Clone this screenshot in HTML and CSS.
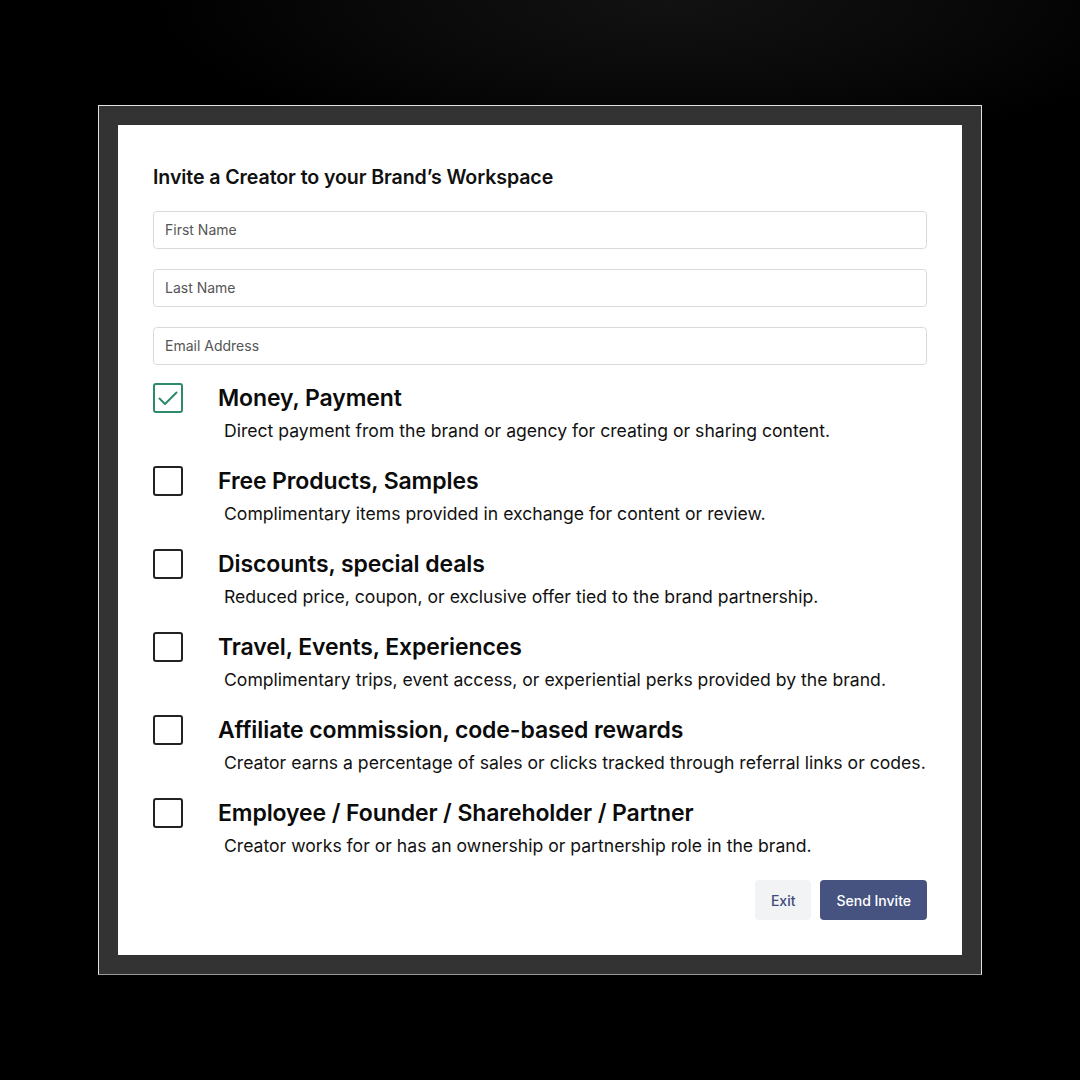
FILE: index.html
```html
<!DOCTYPE html>
<html lang="en">
<head>
<meta charset="utf-8">
<title>Invite a Creator</title>
<link rel="stylesheet" href="styles.css">
</head>
<body>
<div class="frame">
  <div class="card">
    <h1 class="title">Invite a Creator to your Brand’s Workspace</h1>
    <div class="fields">
      <div class="field">First Name</div>
      <div class="field">Last Name</div>
      <div class="field">Email Address</div>
    </div>
    <div class="options">
      <div class="option">
        <span class="box checked">
          <svg viewBox="0 0 30 30" width="30" height="30"><path d="M6.5 15.5 L12 21 L23.5 9.5" fill="none" stroke="#2f8a6c" stroke-width="2" stroke-linecap="round" stroke-linejoin="round"/></svg>
        </span>
        <div class="text">
          <div class="opt-title">Money, Payment</div>
          <div class="opt-desc">Direct payment from the brand or agency for creating or sharing content.</div>
        </div>
      </div>
      <div class="option">
        <span class="box"></span>
        <div class="text">
          <div class="opt-title">Free Products, Samples</div>
          <div class="opt-desc">Complimentary items provided in exchange for content or review.</div>
        </div>
      </div>
      <div class="option">
        <span class="box"></span>
        <div class="text">
          <div class="opt-title">Discounts, special deals</div>
          <div class="opt-desc">Reduced price, coupon, or exclusive offer tied to the brand partnership.</div>
        </div>
      </div>
      <div class="option">
        <span class="box"></span>
        <div class="text">
          <div class="opt-title">Travel, Events, Experiences</div>
          <div class="opt-desc">Complimentary trips, event access, or experiential perks provided by the brand.</div>
        </div>
      </div>
      <div class="option">
        <span class="box"></span>
        <div class="text">
          <div class="opt-title">Affiliate commission, code-based rewards</div>
          <div class="opt-desc">Creator earns a percentage of sales or clicks tracked through referral links or codes.</div>
        </div>
      </div>
      <div class="option">
        <span class="box"></span>
        <div class="text">
          <div class="opt-title">Employee / Founder / Shareholder / Partner</div>
          <div class="opt-desc">Creator works for or has an ownership or partnership role in the brand.</div>
        </div>
      </div>
    </div>
    <div class="actions">
      <button class="btn btn-exit">Exit</button>
      <button class="btn btn-send">Send Invite</button>
    </div>
  </div>
</div>
</body>
</html>
```

FILE: styles.css
```css
* { box-sizing: border-box; }

html, body {
  margin: 0;
  padding: 0;
}

body {
  width: 1080px;
  height: 1080px;
  overflow: hidden;
  background: radial-gradient(ellipse 520px 160px at 62% 0%, #121212 0%, #0a0a0a 50%, #000 100%), #000;
  font-family: Inter, "Noto Sans", "Liberation Sans", sans-serif;
  color: #000;
}

.frame {
  width: 884px;
  height: 870px;
  margin: 105px 0 0 98px;
  padding: 19px;
  background: #333;
  border: 1px solid #e2e2e2;
  border-bottom-color: #9a9a9a;
}

.card {
  width: 844px;
  height: 830px;
  background: #fff;
  padding: 40px 35px 35px 35px;
}

.title {
  margin: 0;
  font-size: 19.6px;
  line-height: 24px;
  font-weight: 600;
  color: #111;
  letter-spacing: -0.1px;
}

.fields {
  display: flex;
  flex-direction: column;
  gap: 20px;
  margin-top: 22px;
}

.field {
  height: 38px;
  border: 1px solid #dadada;
  border-radius: 4px;
  padding: 0 11px;
  display: flex;
  align-items: center;
  font-size: 14px;
  color: #555;
  padding-bottom: 1px;
}

.options {
  display: flex;
  flex-direction: column;
  gap: 23px;
  margin-top: 18px;
}

.option {
  display: flex;
  align-items: flex-start;
}

.box {
  flex: none;
  width: 30px;
  height: 30px;
  border: 2px solid #222;
  border-radius: 3px;
  position: relative;
}

.box.checked {
  border-color: #2f8a6c;
}

.box svg {
  position: absolute;
  left: -2px;
  top: -2px;
}

.text {
  margin-left: 35px;
}

.opt-title {
  font-size: 23px;
  line-height: 30px;
  font-weight: 600;
  letter-spacing: -0.1px;
  color: #0b0b0b;
}

.opt-desc {
  margin-top: 6px;
  padding-left: 6px;
  font-size: 17.6px;
  line-height: 24px;
  color: #111;
}

.actions {
  display: flex;
  justify-content: flex-end;
  gap: 9px;
  margin-top: 22px;
}

.btn {
  height: 40px;
  border: none;
  border-radius: 4px;
  padding: 0 16px;
  font-family: Inter, "Noto Sans", "Liberation Sans", sans-serif;
  font-size: 14px;
  font-weight: 500;
}

.btn-exit {
  background: #f2f3f5;
  color: #3f4b7c;
}

.btn-send {
  background: #465381;
  color: #fff;
}
```
